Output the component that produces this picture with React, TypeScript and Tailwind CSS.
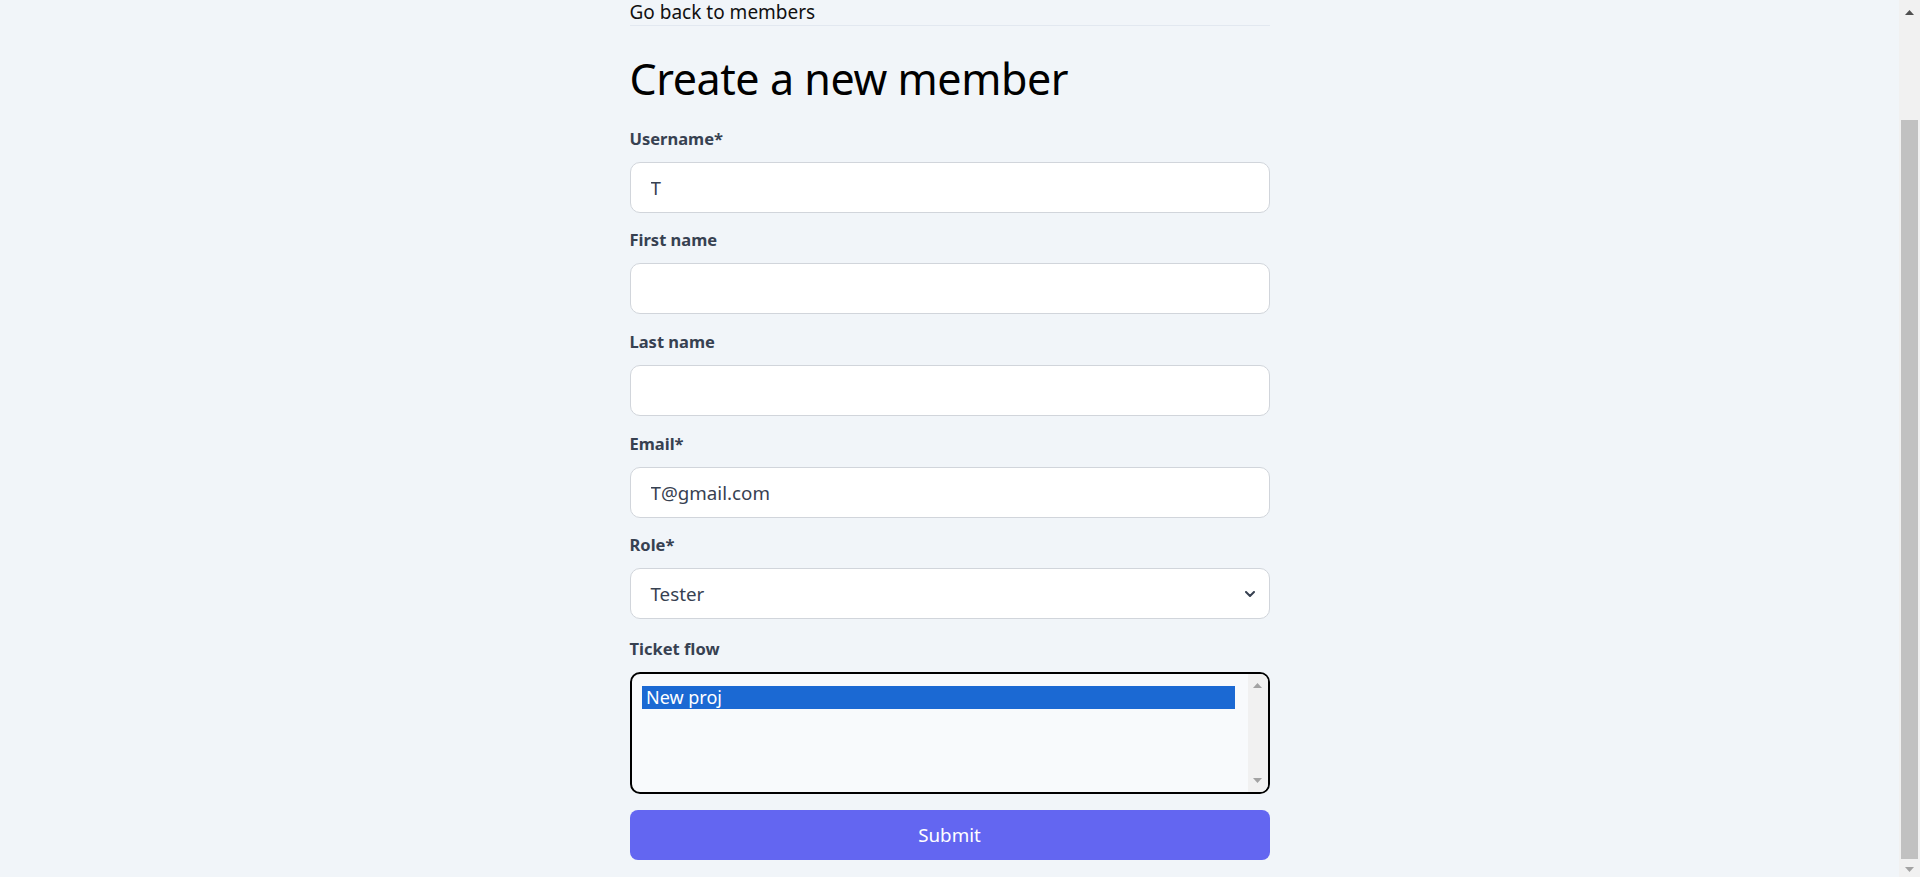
import React from "react";

function Label({ children }: { children: React.ReactNode }) {
  return (
    <label className="block text-[16.5px] leading-[24px] font-bold text-[#374151] mb-[11px]">
      {children}
    </label>
  );
}

function TextField({ label, value, first }: { label: string; value?: string; first?: boolean }) {
  return (
    <div className={first ? "" : "mt-[15.6px]"}>
      <Label>{label}</Label>
      <input
        readOnly
        defaultValue={value ?? ""}
        className="block w-full h-[51px] rounded-[10px] border border-[#d1d5db] bg-white pl-[20px] pr-[16px] text-[18.75px] text-[#374151] outline-none"
      />
    </div>
  );
}

function PageScrollbar() {
  return (
    <div className="w-[21px] h-full bg-[#f1f1f1] flex flex-col items-center shrink-0">
      <svg width="9" height="5" viewBox="0 0 9 5" className="mt-[10px]">
        <path d="M4.5 0L9 5H0z" fill="#505050" />
      </svg>
      <div className="mt-[105px] w-[17px] h-[739px] bg-[#c1c1c1]" />
      <svg width="9" height="5" viewBox="0 0 9 5" className="mt-[7.5px]">
        <path d="M0 0h9L4.5 5z" fill="#a3a3a3" />
      </svg>
    </div>
  );
}

export default function App() {
  return (
    <div className="flex h-screen w-full overflow-hidden bg-[#f1f5f9] font-['Noto_Sans',sans-serif]">
      <main className="flex-1 flex justify-center">
        <div className="w-[640px] flex flex-col">
          <div className="text-[19px] leading-[24px] pb-[1px] border-b border-[#e2e8f0] text-[#111111]">
            Go back to members
          </div>
          <h1 className="mt-[25.5px] text-[43px] leading-[54px] tracking-[-0.01em] text-black font-normal">
            Create a new member
          </h1>
          <form className="mt-[21.3px] flex flex-col">
            <TextField label="Username*" value="T" first />
            <TextField label="First name" />
            <TextField label="Last name" />
            <TextField label="Email*" value="T@gmail.com" />
            <div className="mt-[15.6px]">
              <Label>Role*</Label>
              <div className="flex items-center justify-between w-full h-[51px] rounded-[10px] border border-[#d1d5db] bg-white pl-[20px] pr-[14px] text-[18.75px] text-[#374151]">
                <span>Tester</span>
                <svg width="10" height="6" viewBox="0 0 10 6" fill="none">
                  <path d="M1 1l4 4 4-4" stroke="#374151" strokeWidth="2" strokeLinecap="round" strokeLinejoin="round" />
                </svg>
              </div>
            </div>
            <div className="mt-[18px]">
              <Label>Ticket flow</Label>
              <div className="flex w-full h-[122px] rounded-[10px] border-2 border-black bg-[#f8fafc] overflow-hidden">
                <div className="flex-1 pl-[10.5px] pt-[12px] pr-[13px]">
                  <div className="h-[22.5px] bg-[#1b69d3] text-white text-[18px] leading-[22.5px] pl-[4px]">
                    New proj
                  </div>
                </div>
                <div className="w-[20px] h-full bg-[#f1f1f1] flex flex-col items-center justify-between py-[9px]">
                  <svg width="9" height="5" viewBox="0 0 9 5">
                    <path d="M4.5 0L9 5H0z" fill="#a3a3a3" />
                  </svg>
                  <svg width="9" height="5" viewBox="0 0 9 5">
                    <path d="M0 0h9L4.5 5z" fill="#a3a3a3" />
                  </svg>
                </div>
              </div>
            </div>
            <button
              type="button"
              className="mt-[16px] w-full h-[50px] rounded-[8px] bg-[#6366f1] text-white text-[18.75px]"
            >
              Submit
            </button>
          </form>
        </div>
      </main>
      <PageScrollbar />
    </div>
  );
}
